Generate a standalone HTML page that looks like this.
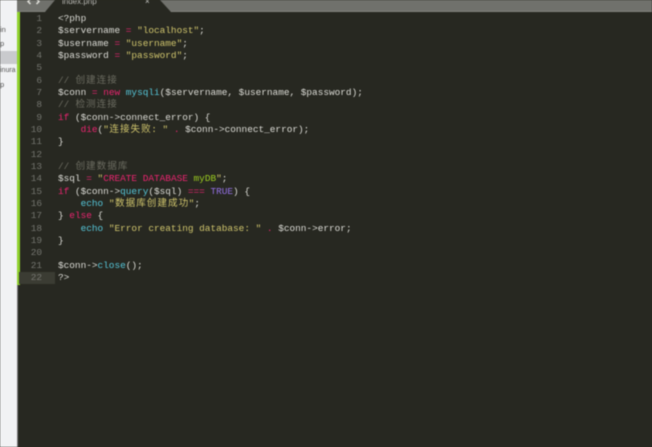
<!DOCTYPE html>
<html><head><meta charset="utf-8">
<style>
html,body{margin:0;padding:0;width:652px;height:447px;overflow:hidden;background:#272821}
#wrap{position:absolute;left:0;top:0;width:652px;height:447px;overflow:hidden;filter:blur(.65px)}
#code{position:absolute;left:0;top:.7px;width:652px;height:446px}
.abs{position:absolute}
.l,.n{position:absolute;font:9.42px/12.33px "Liberation Mono","Noto Sans CJK SC",monospace;white-space:pre;height:12.33px}
.l{left:58px;color:#dcdcd6}
.n{left:20px;width:22px;text-align:right;color:#74756f}
.side{position:absolute;left:0;font:7.5px/10px "Liberation Sans",sans-serif;color:#555}
.r{color:#e8246f}.y{color:#cfc46c}.c{color:#6b6b60}.b{color:#55c5d8}.g{color:#9bcc1f}.p{color:#9470e6}
.z{display:inline-block;width:10.6px;text-align:center;font-size:9.6px}
</style></head><body>
<div id="wrap">
<div class="abs" style="left:0;top:0;width:17px;height:447px;background:#f1f2f4"></div>
<div class="abs" style="left:0;top:51px;width:17px;height:13px;background:#c9cacd"></div>
<div class="side" style="top:25px">in</div>
<div class="side" style="top:39px">p</div>
<div class="side" style="top:66px;font-size:7px">inura</div>
<div class="side" style="top:80px">p</div>
<div class="abs" style="left:17px;top:285px;width:1px;height:162px;background:#77787a"></div>
<div class="abs" style="left:18px;top:0;width:634px;height:447px;background:#272821"></div>
<svg class="abs" style="left:17px;top:0" width="635" height="13">
<polygon points="0,0 635,0 635,12 0,12" fill="#70716c"/>
<rect x="0" y="10.8" width="635" height="1.2" fill="#8a8b86" opacity=".5"/>
<polygon points="28,12 38,0 143,0 154,12" fill="#272821"/>
<path d="M13.5 -1 L11 1.5 L13.5 4 M19.5 -1 L22 1.5 L19.5 4" stroke="#e0e0da" stroke-width="1.5" fill="none"/>
</svg>
<div class="abs" style="left:62px;top:-3px;font:8px/10px 'Liberation Sans',sans-serif;color:#b5b5b0">index.php</div>
<div class="abs" style="left:145px;top:-2px;font:8px/8px 'Liberation Sans',sans-serif;color:#c9c9c5">×</div>
<div class="abs" style="left:17px;top:12px;width:2.5px;height:273px;background:#8fd12c"></div>
<div class="abs" style="left:19px;top:272px;width:36px;height:12px;background:#3b3c33"></div>
<div id="code">
<div class="n" style="top:12.5px">1</div><div class="l" style="top:12.5px">&lt;?php</div>
<div class="n" style="top:24.8px">2</div><div class="l" style="top:24.8px">$servername <span class="r">=</span> <span class="y">"localhost"</span>;</div>
<div class="n" style="top:37.2px">3</div><div class="l" style="top:37.2px">$username <span class="r">=</span> <span class="y">"username"</span>;</div>
<div class="n" style="top:49.5px">4</div><div class="l" style="top:49.5px">$password <span class="r">=</span> <span class="y">"password"</span>;</div>
<div class="n" style="top:61.8px">5</div>
<div class="n" style="top:74.2px">6</div><div class="l c" style="top:74.2px">// <span class="z">创</span><span class="z">建</span><span class="z">连</span><span class="z">接</span></div>
<div class="n" style="top:86.5px">7</div><div class="l" style="top:86.5px">$conn <span class="r">=</span> <span class="r">new</span> <span class="b">mysqli</span>($servername, $username, $password);</div>
<div class="n" style="top:98.8px">8</div><div class="l c" style="top:98.8px">// <span class="z">检</span><span class="z">测</span><span class="z">连</span><span class="z">接</span></div>
<div class="n" style="top:111.1px">9</div><div class="l" style="top:111.1px"><span class="r">if</span> ($conn-&gt;connect_error) {</div>
<div class="n" style="top:123.4px">10</div><div class="l" style="top:123.4px">    <span class="r">die</span>(<span class="y">"<span class="z">连</span><span class="z">接</span><span class="z">失</span><span class="z">败</span>: "</span> <span class="r">.</span> $conn-&gt;connect_error);</div>
<div class="n" style="top:135.8px">11</div><div class="l" style="top:135.8px">}</div>
<div class="n" style="top:148.1px">12</div>
<div class="n" style="top:160.4px">13</div><div class="l c" style="top:160.4px">// <span class="z">创</span><span class="z">建</span><span class="z">数</span><span class="z">据</span><span class="z">库</span></div>
<div class="n" style="top:172.8px">14</div><div class="l" style="top:172.8px">$sql <span class="r">=</span> <span class="y">"</span><span class="r">CREATE DATABASE</span> <span class="g">myDB</span><span class="y">"</span>;</div>
<div class="n" style="top:185.1px">15</div><div class="l" style="top:185.1px"><span class="r">if</span> ($conn-&gt;<span class="b">query</span>($sql) <span class="r">===</span> <span class="p">TRUE</span>) {</div>
<div class="n" style="top:197.4px">16</div><div class="l" style="top:197.4px">    <span class="b">echo</span> <span class="y">"<span class="z">数</span><span class="z">据</span><span class="z">库</span><span class="z">创</span><span class="z">建</span><span class="z">成</span><span class="z">功</span>"</span>;</div>
<div class="n" style="top:209.7px">17</div><div class="l" style="top:209.7px">} <span class="r">else</span> {</div>
<div class="n" style="top:222px">18</div><div class="l" style="top:222px">    <span class="b">echo</span> <span class="y">"Error creating database: "</span> <span class="r">.</span> $conn-&gt;error;</div>
<div class="n" style="top:234.4px">19</div><div class="l" style="top:234.4px">}</div>
<div class="n" style="top:246.7px">20</div>
<div class="n" style="top:259px">21</div><div class="l" style="top:259px">$conn-&gt;<span class="b">close</span>();</div>
<div class="n" style="top:271.4px">22</div><div class="l" style="top:271.4px">?&gt;</div>
</div>
</div>
</body></html>
